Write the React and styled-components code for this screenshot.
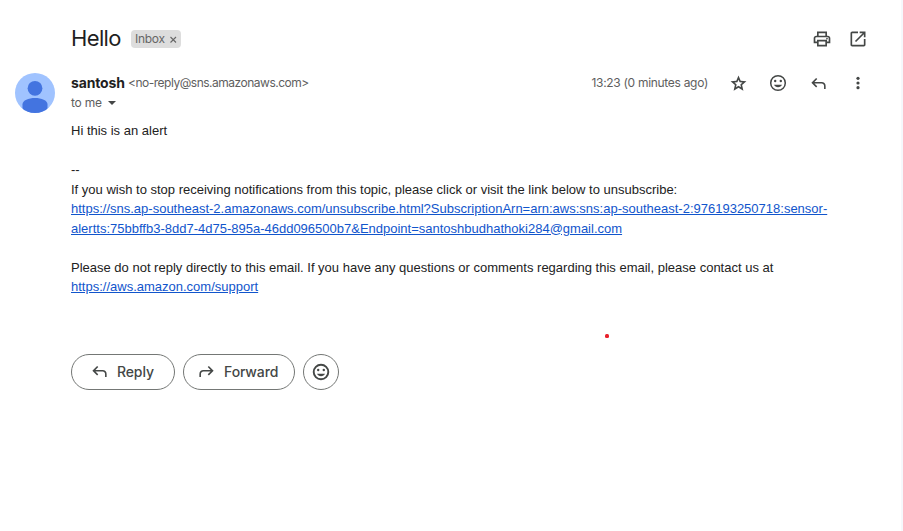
import React from "react";
import styled, { createGlobalStyle } from "styled-components";

const GlobalStyle = createGlobalStyle`
  *, *::before, *::after { box-sizing: border-box; }
  html, body, #root { height: 100%; }
  body {
    margin: 0;
    overflow: hidden;
    background: #ffffff;
    color: #1f1f1f;
    font-family: Inter, "Open Sans", sans-serif;
  }
`;

const Page = styled.main`
  position: relative;
  width: 903px;
  height: 531px;
  padding: 26px 33px 0 15px;
  border-right: 2px solid #f6f8fc;
  background: #ffffff;
`;

const SubjectRow = styled.header`
  display: flex;
  align-items: center;
  height: 26px;
  padding-left: 56px;
`;

const Subject = styled.h1`
  width: 60px;
  margin: 0;
  padding-bottom: 2px;
  font-size: 22px;
  font-weight: 400;
  line-height: 24px;
  letter-spacing: -0.65px;
`;

const Label = styled.span`
  display: flex;
  align-items: center;
  gap: 5px;
  width: 50px;
  height: 18px;
  padding-left: 4px;
  border-radius: 4px;
  background: #dddddd;
  color: #666666;
  font-size: 12px;
  line-height: 18px;
  letter-spacing: -0.3px;
`;

const Actions = styled.div`
  display: flex;
  align-items: center;
  gap: ${({ $gap }) => $gap}px;
  margin-left: auto;
`;

const IconButton = styled.button`
  display: flex;
  align-items: center;
  justify-content: center;
  width: 20px;
  height: 20px;
  padding: ${({ $drop }) => $drop || 0}px 0 0;
  border: 0;
  background: none;
  color: #444746;
`;

const Icon = styled.svg`
  display: block;
  flex: none;
  width: ${({ $size }) => $size || 20}px;
  height: ${({ $size }) => $size || 20}px;
  fill: currentColor;
`;

const Message = styled.article`
  display: grid;
  grid-template-columns: 40px 1fr;
  column-gap: 16px;
  padding-top: 21px;
`;

const Avatar = styled.svg`
  display: block;
  width: 40px;
  height: 40px;
`;

const SenderRow = styled.div`
  display: flex;
  align-items: center;
  height: 20px;
`;

const Sender = styled.span`
  width: 57px;
  font-size: 14px;
  font-weight: 700;
  line-height: 20px;
  letter-spacing: -0.15px;
  white-space: nowrap;
`;

const Meta = styled.span`
  color: #5e5e5e;
  font-size: 12px;
  line-height: 20px;
  letter-spacing: ${({ $spacing }) => $spacing || 0}px;
  white-space: nowrap;
`;

const Recipient = styled.div`
  display: flex;
  align-items: center;
  gap: 6px;
  height: 20px;
`;

const Caret = styled.span`
  border: 4px solid transparent;
  border-top: 4px solid #444746;
  border-bottom: 0;
`;

const Body = styled.div`
  width: 775px;
  padding-top: 8px;
  color: #222222;
  font: 13px/19.5px "Liberation Sans", Arial, sans-serif;
`;

const Paragraph = styled.p`
  margin: 0 0 19.5px;
`;

const Link = styled.a`
  color: #1155cc;
  text-decoration: underline;
`;

const ReplyBar = styled.div`
  display: flex;
  gap: 8px;
  margin-top: 57px;
`;

const PillButton = styled.button`
  display: flex;
  align-items: center;
  gap: ${({ $gap }) => $gap || 0}px;
  width: ${({ $width }) => $width}px;
  height: 36px;
  padding: 0 0 0 ${({ $inset }) => $inset}px;
  border: 1px solid #747775;
  border-radius: 18px;
  background: #ffffff;
  color: #444746;
  font: 500 14px/20px Inter, sans-serif;
  letter-spacing: -0.12px;
`;

const Pointer = styled.i`
  position: absolute;
  left: 605px;
  top: 334px;
  width: 4px;
  height: 4px;
  border-radius: 1.5px;
  background: #e8212b;
`;

const paths = {
  print:
    "M640-640v-120H320v120h-80v-200h480v200h-80Zm80 180q17 0 28.5-11.5T760-500q0-17-11.5-28.5T720-540q-17 0-28.5 11.5T680-500q0 17 11.5 28.5T720-460Zm-80 260v-160H320v160h320Zm80 80H240v-160H80v-240q0-51 35-85.5t85-34.5h560q51 0 85.5 34.5T880-520v240H720v160Zm80-240v-160q0-17-11.5-28.5T760-560H200q-17 0-28.5 11.5T160-520v160h80v-80h480v80h80Z",
  open:
    "M200-120q-33 0-56.5-23.5T120-200v-560q0-33 23.5-56.5T200-840h280v80H200v560h560v-280h80v280q0 33-23.5 56.5T760-120H200Zm188-212-56-56 372-372H560v-80h280v280h-80v-144L388-332Z",
  star:
    "m354-287 126-76 126 77-33-144 111-96-146-13-58-136-58 135-146 13 111 97-33 143ZM233-120l65-281L80-590l288-25 112-265 112 265 288 25-218 189 65 281-247-149-247 149Z",
  reply:
    "M760-200v-160q0-50-35-85t-85-35H273l144 144-57 56-240-240 240-240 57 56-144 144h367q83 0 141.5 58.5T840-360v160h-80Z",
  forward:
    "M200-200v-160q0-50 35-85t85-35h367L543-336l57 56 240-240-240-240-57 56 144 144H320q-83 0-141.5 58.5T120-360v160h80Z",
};

const Glyph = ({ name, size }) => (
  <Icon $size={size} viewBox="0 -960 960 960" aria-hidden="true">
    <path d={paths[name]} />
  </Icon>
);

const More = () => (
  <Icon viewBox="0 0 20 20" aria-hidden="true">
    <circle cx="10" cy="5.3" r="1.6" />
    <circle cx="10" cy="10" r="1.6" />
    <circle cx="10" cy="14.7" r="1.6" />
  </Icon>
);

const Smiley = ({ weight = 1.5 }) => (
  <Icon viewBox="0 0 20 20" aria-hidden="true">
    <circle cx="10" cy="10" r="7.3" fill="none" stroke="currentColor" strokeWidth={weight} />
    <circle cx="7.2" cy="8" r="1.2" />
    <circle cx="12.8" cy="8" r="1.2" />
    <path d="M6 11.7h8c-.7 1.600-2.100 2.500-4 2.500s-3.300-.9-4-2.500Z" />
  </Icon>
);

export default function App() {
  return (
    <>
      <GlobalStyle />
      <Page>
        <SubjectRow>
          <Subject>Hello</Subject>
          <Label>
            Inbox
            <Icon $size={7} viewBox="0 0 7 7" aria-hidden="true">
              <path d="M.5 1l5.500 5.500M6 1L.5 6.500" stroke="currentColor" strokeWidth="1.1" />
            </Icon>
          </Label>
          <Actions $gap={16}>
            <IconButton aria-label="Print all"><Glyph name="print" /></IconButton>
            <IconButton aria-label="In new window"><Glyph name="open" /></IconButton>
          </Actions>
        </SubjectRow>
        <Message>
          <Avatar viewBox="0 0 40 40" aria-hidden="true">
            <defs>
              <clipPath id="avatar-clip"><circle cx="20" cy="20" r="20" /></clipPath>
            </defs>
            <g clipPath="url(#avatar-clip)">
              <rect width="40" height="40" fill="#a0c3ff" />
              <circle cx="20" cy="15.3" r="7.4" fill="#4374e0" />
              <path d="M7.5 31.5c0-4.300 6-6.500 12.500-6.500s12.500 2.200 12.500 6.500V40h-25Z" fill="#4374e0" />
            </g>
          </Avatar>
          <div>
            <SenderRow>
              <Sender>santosh</Sender>
              <Meta $spacing={-0.49}>&lt;no-reply@sns.amazonaws.com&gt;</Meta>
              <Actions $gap={20}>
                <Meta $spacing={-0.3}>13:23 (0 minutes ago)</Meta>
                <IconButton aria-label="Not starred" $drop={1}><Glyph name="star" size={19} /></IconButton>
                <IconButton aria-label="Add reaction"><Smiley /></IconButton>
                <IconButton aria-label="Reply" $drop={1}><Glyph name="reply" size={19} /></IconButton>
                <IconButton aria-label="More"><More /></IconButton>
              </Actions>
            </SenderRow>
            <Recipient>
              <Meta $spacing={-0.25}>to me</Meta>
              <Caret />
            </Recipient>
            <Body>
              <Paragraph>Hi this is an alert</Paragraph>
              <Paragraph>
                --<br />
                If you wish to stop receiving notifications from this topic, please click or visit the link below to unsubscribe:<br />
                <Link>
                  https://sns.ap-southeast-2.amazonaws.com/unsubscribe.html?SubscriptionArn=arn:aws:sns:ap-southeast-2:976193250718:sensor-<br />
                  alertts:75bbffb3-8dd7-4d75-895a-46dd096500b7&amp;Endpoint=santoshbudhathoki284@gmail.com
                </Link>
              </Paragraph>
              <Paragraph>
                Please do not reply directly to this email. If you have any questions or comments regarding this email, please contact us at{" "}
                <Link>https://aws.amazon.com/support</Link>
              </Paragraph>
            </Body>
            <ReplyBar>
              <PillButton $width={104} $inset={18} $gap={8}><Glyph name="reply" size={19} />Reply</PillButton>
              <PillButton $width={112} $inset={13} $gap={8}><Glyph name="forward" size={19} />Forward</PillButton>
              <PillButton $width={36} $inset={7} aria-label="Add reaction"><Smiley weight={1.9} /></PillButton>
            </ReplyBar>
          </div>
        </Message>
        <Pointer />
      </Page>
    </>
  );
}
